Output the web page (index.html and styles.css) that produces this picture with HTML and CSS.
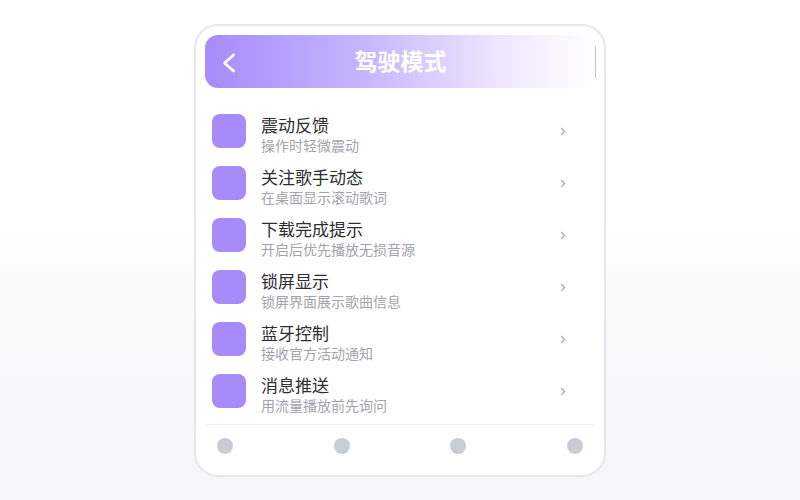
FILE: index.html
```html
<!DOCTYPE html>
<html lang="zh">
<head>
  <meta charset="UTF-8">
  <title>驾驶模式</title>
  <link rel="stylesheet" href="styles.css">
</head>
<body>
  <div class="phone">
    <div class="header">
      <div class="back">
        <svg width="18" height="24" viewBox="0 0 18 24"><path d="M14.5 5 L5.5 13 L14.5 21" fill="none" stroke="#fff" stroke-width="2.7" stroke-linecap="round" stroke-linejoin="round"/></svg>
      </div>
      <h1 class="title">驾驶模式</h1>
      <div class="side"></div>
    </div>

    <ul class="list">
      <li class="item">
        <div class="icon"></div>
        <div class="text">
          <div class="name">震动反馈</div>
          <div class="desc">操作时轻微震动</div>
        </div>
        <svg class="arrow" width="6" height="9" viewBox="0 0 6 9"><path d="M1.2 1 L4.6 4.5 L1.2 8" fill="none" stroke="#a9abb3" stroke-width="1.3"/></svg>
      </li>
      <li class="item">
        <div class="icon"></div>
        <div class="text">
          <div class="name">关注歌手动态</div>
          <div class="desc">在桌面显示滚动歌词</div>
        </div>
        <svg class="arrow" width="6" height="9" viewBox="0 0 6 9"><path d="M1.2 1 L4.6 4.5 L1.2 8" fill="none" stroke="#a9abb3" stroke-width="1.3"/></svg>
      </li>
      <li class="item">
        <div class="icon"></div>
        <div class="text">
          <div class="name">下载完成提示</div>
          <div class="desc">开启后优先播放无损音源</div>
        </div>
        <svg class="arrow" width="6" height="9" viewBox="0 0 6 9"><path d="M1.2 1 L4.6 4.5 L1.2 8" fill="none" stroke="#a9abb3" stroke-width="1.3"/></svg>
      </li>
      <li class="item">
        <div class="icon"></div>
        <div class="text">
          <div class="name">锁屏显示</div>
          <div class="desc">锁屏界面展示歌曲信息</div>
        </div>
        <svg class="arrow" width="6" height="9" viewBox="0 0 6 9"><path d="M1.2 1 L4.6 4.5 L1.2 8" fill="none" stroke="#a9abb3" stroke-width="1.3"/></svg>
      </li>
      <li class="item">
        <div class="icon"></div>
        <div class="text">
          <div class="name">蓝牙控制</div>
          <div class="desc">接收官方活动通知</div>
        </div>
        <svg class="arrow" width="6" height="9" viewBox="0 0 6 9"><path d="M1.2 1 L4.6 4.5 L1.2 8" fill="none" stroke="#a9abb3" stroke-width="1.3"/></svg>
      </li>
      <li class="item">
        <div class="icon"></div>
        <div class="text">
          <div class="name">消息推送</div>
          <div class="desc">用流量播放前先询问</div>
        </div>
        <svg class="arrow" width="6" height="9" viewBox="0 0 6 9"><path d="M1.2 1 L4.6 4.5 L1.2 8" fill="none" stroke="#a9abb3" stroke-width="1.3"/></svg>
      </li>
    </ul>

    <div class="tabbar">
      <span class="dot"></span>
      <span class="dot"></span>
      <span class="dot"></span>
      <span class="dot"></span>
    </div>
  </div>
</body>
</html>
```

FILE: styles.css
```css
html {
  min-height: 100%;
  background: linear-gradient(to bottom, #ffffff 0, #ffffff 44%, #fafafb 56%, #f6f6f8 100%);
}

body {
  margin: 0;
  font-family: "Noto Sans CJK SC", "Noto Sans", sans-serif;
}

.phone {
  box-sizing: border-box;
  width: 412px;
  height: 453px;
  margin: 24px auto 0;
  padding: 9px 8px 0 9px;
  border: 2px solid #e6e6eb;
  border-radius: 24px;
  background: #fff;
}

.header {
  display: flex;
  align-items: center;
  height: 53px;
  border-radius: 13px;
  background: linear-gradient(to right, #a78bfa, #c4b5fd 40%, #ede6fe 75%, #ffffff);
}

.back {
  width: 40px;
  padding-left: 14px;
  display: flex;
  align-items: center;
}

.title {
  flex: 1;
  margin: -3px 0 0;
  text-align: center;
  color: #fff;
  font-size: 23px;
  font-weight: bold;
  line-height: 30px;
}

.side {
  width: 54px;
  height: 32px;
  box-sizing: border-box;
  border-right: 1px solid #c7b6fb;
}

.list {
  list-style: none;
  margin: 17px 0 0;
  padding: 0;
}

.item {
  display: flex;
  align-items: flex-start;
  height: 52px;
  box-sizing: border-box;
  padding: 9px 0 0 7px;
}

.icon {
  width: 34px;
  height: 34px;
  border-radius: 8px;
  background: #a78bfa;
  flex-shrink: 0;
}

.text {
  flex: 1;
  margin: 0 0 0 15px;
}

.name {
  font-size: 17px;
  line-height: 22px;
  color: #2e2e33;
}

.desc {
  font-size: 14px;
  line-height: 18px;
  color: #a3a3ab;
}

.arrow {
  margin: 13px 30px 0 0;
}

.tabbar {
  display: flex;
  justify-content: space-between;
  margin: 7px 2px 0 1px;
  padding: 13px 11px 0;
  border-top: 1px solid #eeeef1;
}

.dot {
  width: 16px;
  height: 16px;
  border-radius: 50%;
  background: #c8ccd3;
}
```
